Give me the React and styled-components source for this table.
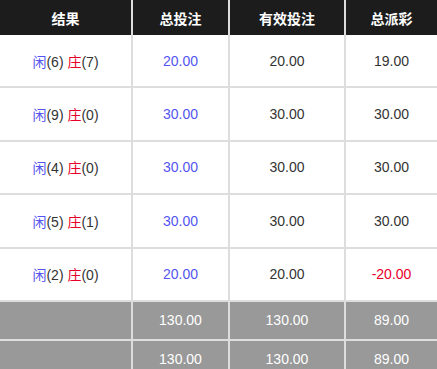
import React from "react";
import styled, { createGlobalStyle } from "styled-components";

const Global = createGlobalStyle`
  html, body { margin: 0; padding: 0; background: #fff; }
  body { font-family: "Liberation Sans", Arial, "Noto Sans CJK SC", sans-serif; }
`;

const Table = styled.table`
  width: 437px;
  border-collapse: separate;
  border-spacing: 0;
  table-layout: fixed;
  font-size: 14px;
  color: #333;
`;

const Col = styled.col`
  width: ${(p) => p.$w}px;
`;

const Th = styled.th`
  height: 35px;
  padding: 0;
  background: #1c1c1c;
  color: #fff;
  font-weight: bold;
  font-size: 14px;
  font-family: "Noto Sans CJK SC", "Liberation Sans", sans-serif;
  text-align: center;
  border-right: ${(p) => (p.$last ? "none" : "2px solid #ddd")};
`;

const Td = styled.td`
  height: ${(p) => (p.$total ? "37px" : "51.4px")};
  padding: 0;
  text-align: center;
  background: ${(p) => (p.$total ? "#999" : "#fff")};
  color: ${(p) =>
    p.$total ? "#fff" : p.$tone === "blue" ? "#5454f0" : p.$tone === "red" ? "#e8002a" : "#333"};
  border-right: ${(p) => (p.$last ? "none" : "2px solid #ddd")};
  border-bottom: 2px solid #ddd;
`;

const Player = styled.span`
  color: #5454f0;
  font-family: "Noto Sans CJK SC", sans-serif;
`;

const Banker = styled.span`
  color: #e8002a;
  font-family: "Noto Sans CJK SC", sans-serif;
`;

const rows = [
  { p: 6, b: 7, bet: "20.00", valid: "20.00", win: "19.00" },
  { p: 9, b: 0, bet: "30.00", valid: "30.00", win: "30.00" },
  { p: 4, b: 0, bet: "30.00", valid: "30.00", win: "30.00" },
  { p: 5, b: 1, bet: "30.00", valid: "30.00", win: "30.00" },
  { p: 2, b: 0, bet: "20.00", valid: "20.00", win: "-20.00", loss: true },
];

export default function App() {
  return (
    <>
      <Global />
      <Table>
        <colgroup>
          <Col $w={133} />
          <Col $w={97} />
          <Col $w={116} />
          <Col $w={91} />
        </colgroup>
        <thead>
          <tr>
            <Th>结果</Th>
            <Th>总投注</Th>
            <Th>有效投注</Th>
            <Th $last>总派彩</Th>
          </tr>
        </thead>
        <tbody>
          {rows.map((r, i) => (
            <tr key={i}>
              <Td>
                <Player>闲</Player>({r.p}) <Banker>庄</Banker>({r.b})
              </Td>
              <Td $tone="blue">{r.bet}</Td>
              <Td>{r.valid}</Td>
              <Td $last $tone={r.loss ? "red" : undefined}>
                {r.win}
              </Td>
            </tr>
          ))}
          {[0, 1].map((k) => (
            <tr key={"t" + k}>
              <Td $total></Td>
              <Td $total>130.00</Td>
              <Td $total>130.00</Td>
              <Td $total $last>89.00</Td>
            </tr>
          ))}
        </tbody>
      </Table>
    </>
  );
}
